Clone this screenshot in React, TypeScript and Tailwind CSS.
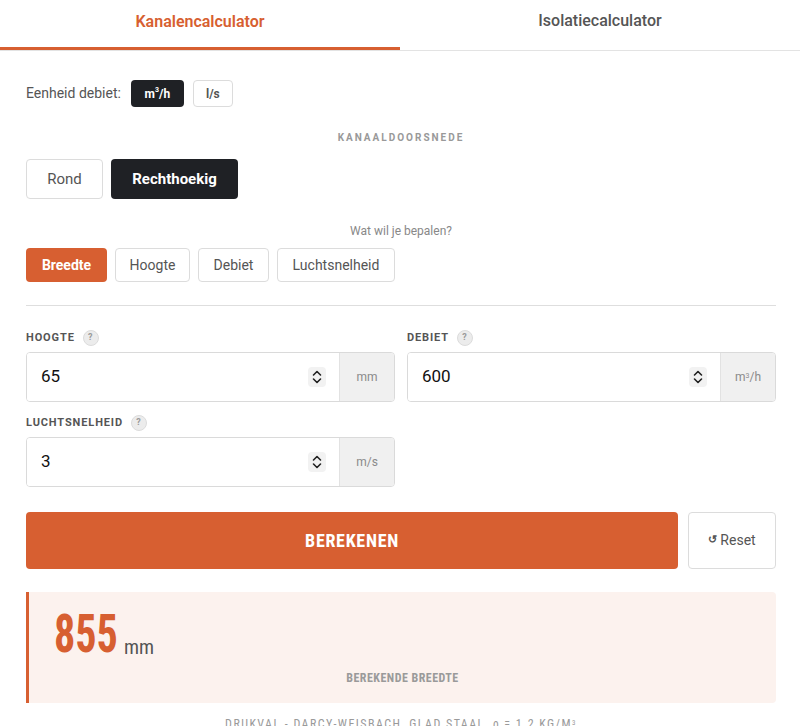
import React from "react";

const font = { fontFamily: "Roboto, 'Noto Sans', sans-serif" };
const cond = "[font-family:'Roboto_Condensed','Liberation_Sans_Narrow','DejaVu_Sans_Condensed',sans-serif]";

function Help() {
  return (
    <span className="ml-2 inline-flex h-[16px] w-[16px] items-center justify-center rounded-full border border-[#dcdcdc] bg-[#ececec] text-[9px] font-bold text-[#9a9a9a]">
      ?
    </span>
  );
}

function Spinner() {
  return (
    <span className="flex h-[20px] w-[18px] items-center justify-center rounded-[4px] bg-[#f2f2f2]">
      <svg width="12" height="16" viewBox="0 0 12 16" fill="none" stroke="#222" strokeWidth="1.6" strokeLinecap="round" strokeLinejoin="round">
        <path d="M2.5 6 L6 2.5 L9.5 6" />
        <path d="M2.5 10 L6 13.5 L9.5 10" />
      </svg>
    </span>
  );
}

function Field({ label, value, unit }: { label: string; value: string; unit: React.ReactNode }) {
  return (
    <div className="flex flex-col">
      <div className="flex h-[16px] items-center text-[11px] font-bold tracking-[0.08em] text-[#555]">
        {label}
        <Help />
      </div>
      <div className="mt-[6px] flex h-[50px] overflow-hidden rounded-[4px] border border-[#dadada]">
        <div className="flex flex-1 items-center justify-between bg-white pl-[14px] pr-[13px]">
          <span className="text-[17px] text-[#111]">{value}</span>
          <Spinner />
        </div>
        <div className="flex w-[55px] items-center justify-center border-l border-[#e2e2e2] bg-[#f0f0f0] text-[12px] text-[#8a8a8a]">
          {unit}
        </div>
      </div>
    </div>
  );
}

export default function App() {
  return (
    <div className="h-[726px] w-[800px] overflow-hidden bg-white" style={font}>
      {/* Tabs */}
      <div className="flex h-[51px] border-b border-[#e3e3e3]">
        <div className="flex w-1/2 items-center justify-center border-b-[3px] border-[#d75f31] pb-[5px] pt-[1px] text-[16px] font-semibold text-[#d75f31]">
          Kanalencalculator
        </div>
        <div className="flex w-1/2 items-center justify-center pb-[8px] text-[16px] font-medium text-[#555]">
          Isolatiecalculator
        </div>
      </div>

      <div className="px-[26px] pr-[24px]">
        {/* Eenheid */}
        <div className="mt-[29px] flex items-center">
          <span className="text-[14px] text-[#555]">Eenheid debiet:</span>
          <span className="ml-[10px] flex h-[27px] w-[53px] items-center justify-center rounded-[4px] bg-[#1f2125] text-[12px] font-bold text-white">
            m<sup className="text-[7px]">3</sup>/h
          </span>
          <span className="ml-[9px] flex h-[27px] w-[40px] items-center justify-center rounded-[4px] border border-[#dcdcdc] text-[12px] font-bold text-[#555]">
            l/s
          </span>
        </div>

        <div className="mt-[23px] text-center text-[10px] font-bold tracking-[0.2em] text-[#999]">KANAALDOORSNEDE</div>

        <div className="mt-[14px] flex gap-[8px]">
          <span className="flex h-[40px] w-[77px] items-center justify-center rounded-[4px] border border-[#dcdcdc] text-[15px] text-[#555]">
            Rond
          </span>
          <span className="flex h-[40px] w-[127px] items-center justify-center rounded-[4px] bg-[#1f2125] text-[15px] font-bold text-white">
            Rechthoekig
          </span>
        </div>

        <div className="mt-[23px] text-center text-[12px] text-[#888]">Wat wil je bepalen?</div>

        <div className="mt-[8px] flex gap-[8px]">
          <span className="flex h-[34px] w-[81px] items-center justify-center rounded-[4px] bg-[#d75f31] text-[14px] font-bold text-white">
            Breedte
          </span>
          <span className="flex h-[34px] w-[75px] items-center justify-center rounded-[4px] border border-[#dcdcdc] text-[14px] text-[#555]">
            Hoogte
          </span>
          <span className="flex h-[34px] w-[71px] items-center justify-center rounded-[4px] border border-[#dcdcdc] text-[14px] text-[#555]">
            Debiet
          </span>
          <span className="flex h-[34px] w-[118px] items-center justify-center rounded-[4px] border border-[#dcdcdc] text-[14px] text-[#555]">
            Luchtsnelheid
          </span>
        </div>

        <div className="mt-[23px] h-px bg-[#dedede]" />

        <div className="mt-[24px] grid grid-cols-2 gap-x-[12px] gap-y-[13px]">
          <Field label="HOOGTE" value="65" unit="mm" />
          <Field
            label="DEBIET"
            value="600"
            unit={
              <span>
                m<sup className="text-[7px]">3</sup>/h
              </span>
            }
          />
          <Field label="LUCHTSNELHEID" value="3" unit="m/s" />
        </div>

        <div className="mt-[25px] flex gap-[10px]">
          <div
            className={`flex h-[57px] flex-1 items-center justify-center rounded-[4px] bg-[#d75f31] text-[18px] font-bold tracking-[0.04em] text-white ${cond}`}
          >
            BEREKENEN
          </div>
          <div className="flex h-[57px] w-[88px] items-center justify-center rounded-[4px] border border-[#dcdcdc] text-[14px] text-[#555]">
            <span className="mr-[3px] text-[11px] font-bold">↺</span>Reset
          </div>
        </div>

        <div className="mt-[23px] flex h-[111px] flex-col rounded-r-[4px] border-l-[3px] border-[#d75f31] bg-[#fcf2ee] pl-[25px]">
          <div className="mt-[18px] flex items-end">
            <span className={`inline-block origin-left scale-x-[0.78] text-[54px] font-bold leading-[48px] text-[#d75f31] ${cond}`}>855</span>
            <span className={`-ml-[12px] mb-[1px] text-[20px] leading-[20px] text-[#555] ${cond}`}>mm</span>
          </div>
          <div className={`mt-[11px] pr-[25px] text-center text-[12px] font-bold tracking-[0.04em] text-[#9a9a9a] ${cond}`}>
            BEREKENDE BREEDTE
          </div>
        </div>

        <div className={`mt-[12px] text-center text-[12px] tracking-[0.12em] text-[#9a9a9a] ${cond}`}>
          DRUKVAL - DARCY-WEISBACH, GLAD STAAL, ρ = 1.2 KG/M<sup className="text-[7px]">3</sup>
        </div>
      </div>
    </div>
  );
}
